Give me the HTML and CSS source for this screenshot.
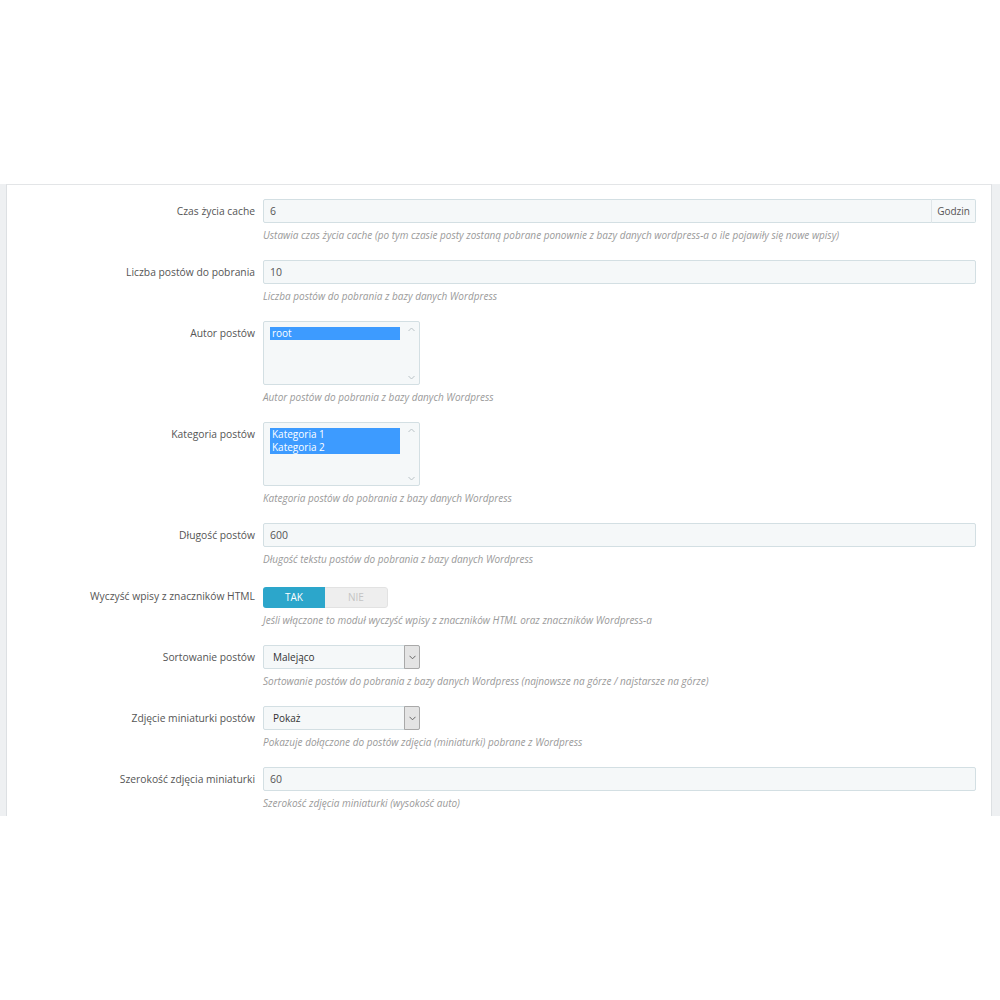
FILE: index.html
```html
<!DOCTYPE html>
<html lang="pl">
<head>
  <meta charset="UTF-8" />
  <title>Ustawienia modułu</title>
  <link rel="stylesheet" href="styles.css">
</head>
<body>
  <div class="page">
    <div class="panel">

      <div class="form-group">
        <label class="control-label">Czas życia cache</label>
        <div class="control">
          <div class="input-group">
            <input type="text" class="form-input" value="6">
            <span class="addon">Godzin</span>
          </div>
          <p class="help-block">Ustawia czas życia cache (po tym czasie posty zostaną pobrane ponownie z bazy danych wordpress-a o ile pojawiły się nowe wpisy)</p>
        </div>
      </div>

      <div class="form-group">
        <label class="control-label">Liczba postów do pobrania</label>
        <div class="control">
          <input type="text" class="form-input" value="10">
          <p class="help-block">Liczba postów do pobrania z bazy danych Wordpress</p>
        </div>
      </div>

      <div class="form-group">
        <label class="control-label">Autor postów</label>
        <div class="control">
          <div class="listbox">
            <div class="options">
              <div class="option selected">root</div>
            </div>
            <div class="scroll">
              <svg width="7" height="5" viewBox="0 0 7 5"><path d="M0.5 4 L3.5 1 L6.5 4" fill="none" stroke="#b9c2c6" stroke-width="1"/></svg>
              <svg width="7" height="5" viewBox="0 0 7 5"><path d="M0.5 1 L3.5 4 L6.5 1" fill="none" stroke="#b9c2c6" stroke-width="1"/></svg>
            </div>
          </div>
          <p class="help-block">Autor postów do pobrania z bazy danych Wordpress</p>
        </div>
      </div>

      <div class="form-group">
        <label class="control-label">Kategoria postów</label>
        <div class="control">
          <div class="listbox">
            <div class="options">
              <div class="option selected">Kategoria 1</div>
              <div class="option selected">Kategoria 2</div>
            </div>
            <div class="scroll">
              <svg width="7" height="5" viewBox="0 0 7 5"><path d="M0.5 4 L3.5 1 L6.5 4" fill="none" stroke="#b9c2c6" stroke-width="1"/></svg>
              <svg width="7" height="5" viewBox="0 0 7 5"><path d="M0.5 1 L3.5 4 L6.5 1" fill="none" stroke="#b9c2c6" stroke-width="1"/></svg>
            </div>
          </div>
          <p class="help-block">Kategoria postów do pobrania z bazy danych Wordpress</p>
        </div>
      </div>

      <div class="form-group">
        <label class="control-label">Długość postów</label>
        <div class="control">
          <input type="text" class="form-input" value="600">
          <p class="help-block">Długość tekstu postów do pobrania z bazy danych Wordpress</p>
        </div>
      </div>

      <div class="form-group">
        <label class="control-label">Wyczyść wpisy z znaczników HTML</label>
        <div class="control">
          <div class="switch">
            <span class="switch-on">TAK</span>
            <span class="switch-off">NIE</span>
          </div>
          <p class="help-block">Jeśli włączone to moduł wyczyść wpisy z znaczników HTML oraz znaczników Wordpress-a</p>
        </div>
      </div>

      <div class="form-group">
        <label class="control-label">Sortowanie postów</label>
        <div class="control">
          <div class="select">
            <span class="select-value">Malejąco</span>
            <span class="select-btn">
              <svg width="7" height="5" viewBox="0 0 7 5"><path d="M0.5 0.8 L3.5 3.8 L6.5 0.8" fill="none" stroke="#666" stroke-width="1"/></svg>
            </span>
          </div>
          <p class="help-block">Sortowanie postów do pobrania z bazy danych Wordpress (najnowsze na górze / najstarsze na górze)</p>
        </div>
      </div>

      <div class="form-group">
        <label class="control-label">Zdjęcie miniaturki postów</label>
        <div class="control">
          <div class="select">
            <span class="select-value">Pokaż</span>
            <span class="select-btn">
              <svg width="7" height="5" viewBox="0 0 7 5"><path d="M0.5 0.8 L3.5 3.8 L6.5 0.8" fill="none" stroke="#666" stroke-width="1"/></svg>
            </span>
          </div>
          <p class="help-block">Pokazuje dołączone do postów zdjęcia (miniaturki) pobrane z Wordpress</p>
        </div>
      </div>

      <div class="form-group last">
        <label class="control-label">Szerokość zdjęcia miniaturki</label>
        <div class="control">
          <input type="text" class="form-input" value="60">
          <p class="help-block">Szerokość zdjęcia miniaturki (wysokość auto)</p>
        </div>
      </div>

    </div>
  </div>
</body>
</html>
```

FILE: styles.css
```css
body {
  margin: 0;
  background: #fff;
  font-family: 'Open Sans', 'DejaVu Sans', sans-serif;
  color: #555;
}
.page {
  margin-top: 184px;
  background: #eef0f2;
  padding: 0 8px 0 6px;
}
.panel {
  background: #fff;
  border-top: 1px solid #e3e5e7;
  border-left: 1px solid #dde0e3;
  border-right: 1px solid #dde0e3;
  padding: 14px 15px 6px 0;
}
.form-group {
  display: grid;
  grid-template-columns: 248px 1fr;
  column-gap: 8px;
  margin-bottom: 18px;
}
.form-group.last {
  margin-bottom: 0;
}
.control-label {
  text-align: right;
  font-size: 10.3px;
  line-height: 25px;
  color: #555;
}
.form-input {
  display: block;
  box-sizing: border-box;
  width: 100%;
  height: 24px;
  margin: 0;
  padding: 0 6px;
  border: 1px solid #d3dfe3;
  border-radius: 2px;
  background: #f5f8f9;
  font-family: inherit;
  font-size: 10.5px;
  color: #555;
  outline: none;
}
.input-group {
  display: flex;
}
.input-group .form-input {
  flex: 1;
  border-radius: 2px 0 0 2px;
}
.addon {
  box-sizing: border-box;
  width: 45px;
  height: 24px;
  line-height: 22px;
  border: 1px solid #d3dfe3;
  border-left: 1px solid #dfe5e8;
  border-radius: 0 2px 2px 0;
  background: #f5f8f9;
  text-align: center;
  font-size: 10px;
  color: #555;
  margin-left: -1px;
}
.help-block {
  margin: 6px 0 0;
  font-size: 10px;
  line-height: 13px;
  font-style: italic;
  color: #9a9a9a;
}
.listbox {
  box-sizing: border-box;
  width: 157px;
  height: 64px;
  border: 1px solid #d3dfe3;
  border-radius: 2px;
  background: #f5f8f9;
  display: flex;
}
.options {
  width: 130px;
  padding: 5px 0 0 6px;
}
.option {
  height: 13px;
  line-height: 13px;
  padding-left: 2px;
  font-size: 10px;
  color: #fff;
}
.option.selected {
  background: #3d9bff;
}
.scroll {
  flex: 1;
  display: flex;
  flex-direction: column;
  justify-content: space-between;
  align-items: center;
  padding: 5px 0 4px 3px;
}
.switch {
  display: flex;
  width: 125px;
  height: 21px;
  margin-top: 3px;
  border-radius: 3px;
  overflow: hidden;
  font-size: 10px;
  line-height: 21px;
  text-align: center;
}
.switch-on {
  width: 62px;
  background: #2ca6cb;
  color: #fff;
}
.switch-off {
  flex: 1;
  background: #eeeeee;
  color: #c4c4c4;
  box-sizing: border-box;
  border: 1px solid #e2e2e2;
  border-left: none;
  border-radius: 0 3px 3px 0;
  line-height: 19px;
}
.select {
  box-sizing: border-box;
  width: 157px;
  height: 24px;
  border: 1px solid #d3dfe3;
  border-radius: 2px;
  background: #f5f8f9;
  display: flex;
  align-items: stretch;
}
.select-value {
  flex: 1;
  padding-left: 9px;
  font-size: 10px;
  line-height: 22px;
  color: #333;
}
.select-btn {
  width: 14px;
  margin: -1px -1px -1px 0;
  border: 1px solid #a9a9a9;
  border-radius: 0 2px 2px 0;
  background: #e4e4e4;
  display: flex;
  align-items: center;
  justify-content: center;
}
```
